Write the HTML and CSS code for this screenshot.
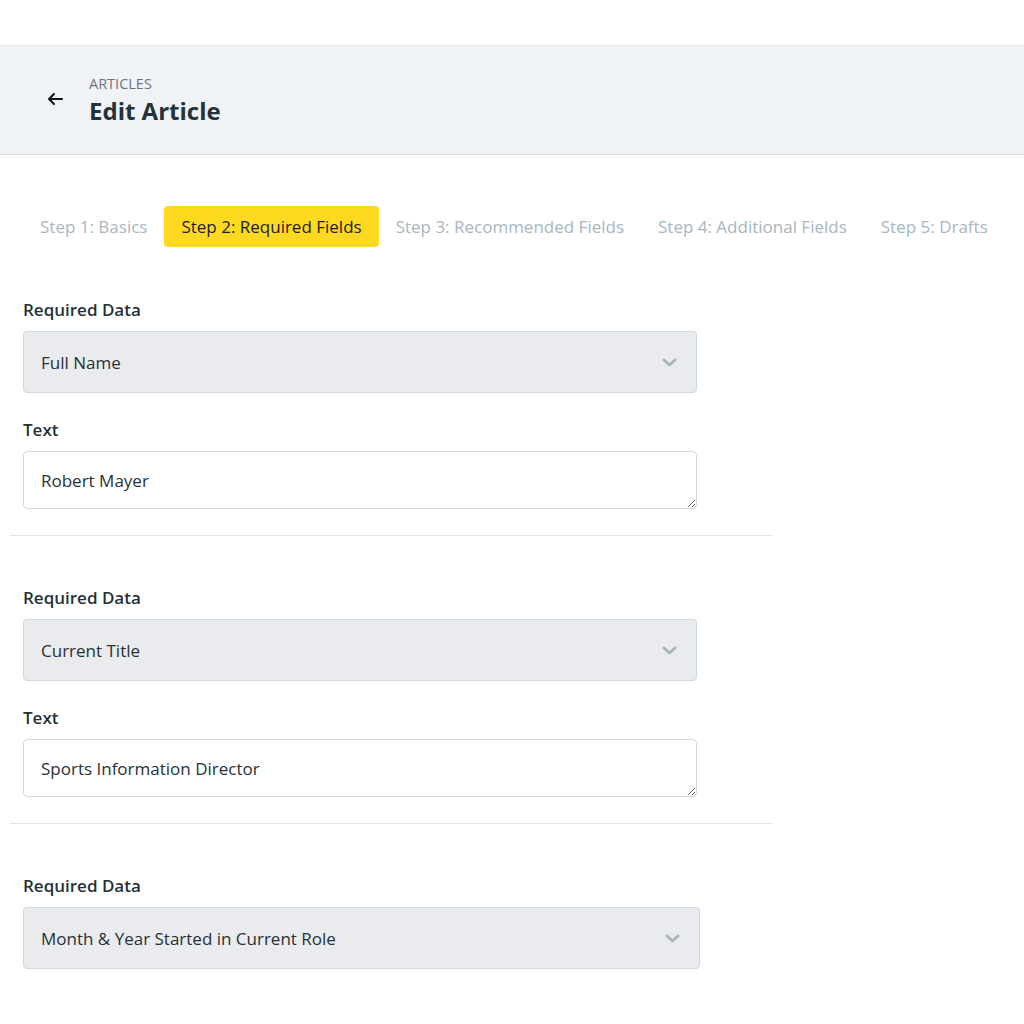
FILE: index.html
```html
<!DOCTYPE html>
<html lang="en">
<head>
  <meta charset="UTF-8">
  <meta name="viewport" content="width=device-width, initial-scale=1.0">
  <title>Edit Article</title>
  <link rel="stylesheet" href="styles.css">
</head>
<body>
  <div class="topbar"></div>
  <div class="page-header">
    <a class="back" href="#" aria-label="Back">
      <svg width="16" height="14" viewBox="0 0 16 14" fill="none" stroke="#111" stroke-width="2" stroke-linecap="round" stroke-linejoin="round"><path d="M15 7H2M7 2L2 7l5 5"/></svg>
    </a>
    <div class="titles">
      <div class="crumb">ARTICLES</div>
      <h1>Edit Article</h1>
    </div>
  </div>

  <nav class="steps">
    <a class="step" href="#">Step 1: Basics</a>
    <a class="step active" href="#">Step 2: Required Fields</a>
    <a class="step" href="#">Step 3: Recommended Fields</a>
    <a class="step" href="#">Step 4: Additional Fields</a>
    <a class="step" href="#">Step 5: Drafts</a>
  </nav>

  <div class="form">
    <div class="section">
      <label class="field-label">Required Data</label>
      <div class="select">
        <span>Full Name</span>
        <svg class="chevron" width="15" height="9" viewBox="0 0 15 9" fill="none" stroke="#a8b5bf" stroke-width="3" stroke-linecap="round" stroke-linejoin="round"><path d="M2 2l5.5 5 5.5-5"/></svg>
      </div>
      <label class="field-label">Text</label>
      <textarea class="text-input" rows="1">Robert Mayer</textarea>
    </div>

    <div class="section">
      <label class="field-label">Required Data</label>
      <div class="select">
        <span>Current Title</span>
        <svg class="chevron" width="15" height="9" viewBox="0 0 15 9" fill="none" stroke="#a8b5bf" stroke-width="3" stroke-linecap="round" stroke-linejoin="round"><path d="M2 2l5.5 5 5.5-5"/></svg>
      </div>
      <label class="field-label">Text</label>
      <textarea class="text-input" rows="1">Sports Information Director</textarea>
    </div>

    <div class="section last">
      <label class="field-label">Required Data</label>
      <div class="select">
        <span>Month &amp; Year Started in Current Role</span>
        <svg class="chevron" width="15" height="9" viewBox="0 0 15 9" fill="none" stroke="#a8b5bf" stroke-width="3" stroke-linecap="round" stroke-linejoin="round"><path d="M2 2l5.5 5 5.5-5"/></svg>
      </div>
    </div>
  </div>
</body>
</html>
```

FILE: styles.css
```css
* { box-sizing: border-box; }
body { margin: 0; font-family: 'Open Sans', 'Noto Sans', sans-serif; color: #263238; background: #fff; }

.topbar { height: 46px; border-bottom: 1px solid #dde4ea; background: #fff; }
.page-header { height: 109px; background: #f0f3f6; border-bottom: 1px solid #d6dfe6; display: flex; align-items: center; padding-left: 47px; gap: 26px; }
.back { display: flex; align-items: center; margin-top: -2px; }
.titles { display: flex; flex-direction: column; padding-top: 4px; }
.crumb { font-size: 14.5px; line-height: 18px; color: #6d7379; }
.page-header h1 { margin: 0; font-size: 24px; line-height: 36px; font-weight: 700; color: #263238; }

.steps { display: flex; padding: 51px 0 0 23px; }
.step { height: 41px; line-height: 41px; padding: 0 17px; font-size: 17px; color: #a9b6c0; text-decoration: none; border-radius: 4px; white-space: nowrap; }
.step.active { background: #ffd91f; color: #1c1c1c; }

.form { margin-left: 10px; width: 763px; padding-top: 52px; }
.section { padding: 0 13px 26px; border-bottom: 1px solid #dfe5ea; margin-bottom: 51px; }
.section.last { border-bottom: none; }
.field-label { display: block; font-size: 17px; line-height: 22px; font-weight: 600; color: #263238; margin-bottom: 10px; }
.select { width: 674px; height: 62px; background: #e9ebee; border: 1px solid #cdd9e1; border-radius: 4px; display: flex; align-items: center; justify-content: space-between; padding: 0 19px 0 17px; font-size: 17px; color: #263238; margin-bottom: 26px; }
.section.last .select { width: 677px; }
.chevron { display: block; }
.text-input { display: block; width: 674px; height: 58px; border: 1px solid #cdd9e1; border-radius: 4px; padding: 17px 17px 0; font-family: inherit; font-size: 17px; line-height: 24px; color: #263238; background: #fff; resize: vertical; outline: none; }
```
